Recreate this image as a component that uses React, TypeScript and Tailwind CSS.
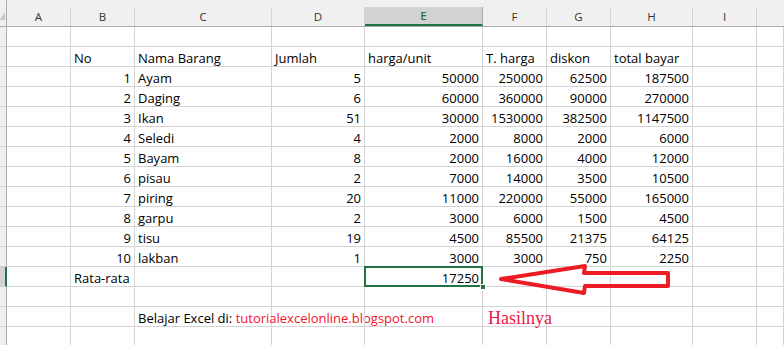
const cols = ["A", "B", "C", "D", "E", "F", "G", "H", "I", ""];

type Row = [number, string, number, number, number, number, number];

const items: Row[] = [
  [1, "Ayam", 5, 50000, 250000, 62500, 187500],
  [2, "Daging", 6, 60000, 360000, 90000, 270000],
  [3, "Ikan", 51, 30000, 1530000, 382500, 1147500],
  [4, "Seledi", 4, 2000, 8000, 2000, 6000],
  [5, "Bayam", 8, 2000, 16000, 4000, 12000],
  [6, "pisau", 2, 7000, 14000, 3500, 10500],
  [7, "piring", 20, 11000, 220000, 55000, 165000],
  [8, "garpu", 2, 3000, 6000, 1500, 4500],
  [9, "tisu", 19, 4500, 85500, 21375, 64125],
  [10, "lakban", 1, 3000, 3000, 750, 2250],
];

const gridCols =
  "grid grid-cols-[7px_64px_64px_137px_93px_118px_64px_64px_82px_64px_27px]";

function Cell({
  children,
  right,
  className = "",
}: {
  children?: React.ReactNode;
  right?: boolean;
  className?: string;
}) {
  return (
    <div
      className={`h-[20px] border-r border-b border-[#d4d4d4] px-[3px] text-[13px] leading-[22px] whitespace-nowrap ${
        right ? "text-right" : "text-left"
      } ${className}`}
    >
      {children}
    </div>
  );
}

function RowHead({ active }: { active?: boolean }) {
  return (
    <div
      className={`h-[20px] border-b border-[#d4d4d4] ${
        active
          ? "bg-[#d2d2d2] border-r-2 border-r-[#217346]"
          : "bg-[#f0f0f0] border-r border-r-[#ababab]"
      }`}
    />
  );
}

function SheetRow({
  cells,
  active,
}: {
  cells: { v?: React.ReactNode; right?: boolean; sel?: boolean }[];
  active?: boolean;
}) {
  return (
    <div className={gridCols}>
      <RowHead active={active} />
      {Array.from({ length: 10 }).map((_, i) => {
        const c = cells[i] ?? {};
        if (c.sel) {
          return (
            <div key={i} className="relative">
              <Cell right>{c.v}</Cell>
              <div className="absolute -left-[1px] -top-[1px] w-[119px] h-[21px] border-2 border-[#217346]" />
              <div className="absolute right-[-3px] bottom-[-3px] w-[6px] h-[6px] bg-[#217346] border border-white" />
            </div>
          );
        }
        return (
          <Cell key={i} right={c.right}>
            {c.v}
          </Cell>
        );
      })}
    </div>
  );
}

export default function App() {
  return (
    <div className="relative w-[784px] h-[345px] overflow-hidden bg-white text-black font-['Open_Sans',sans-serif]">
      {/* column letters */}
      <div className={`${gridCols} h-[27px] bg-[#f0f0f0] border-b border-[#ababab]`}>
        <div className="relative border-r border-[#ababab]">
          <div className="absolute left-0 top-[12px] w-0 h-0 border-t-[8px] border-t-transparent border-r-[5px] border-r-[#c6c6c6]" />
        </div>
        {cols.map((c, i) => (
          <div
            key={i}
            className={`mt-[7px] h-[19px] flex items-center justify-center text-[11.5px] ${
              c === "E"
                ? "bg-[#d2d2d2] text-[#217346] font-semibold border-b-2 border-[#217346] border-r border-r-[#ababab]"
                : "text-[#333] border-r border-[#d4d4d4]"
            } ${i === 9 ? "border-r-0" : ""}`}
          >
            {c}
          </div>
        ))}
      </div>

      <SheetRow cells={[]} />
      <SheetRow
        cells={[
          {},
          { v: "No" },
          { v: "Nama Barang" },
          { v: "Jumlah" },
          { v: "harga/unit" },
          { v: "T. harga" },
          { v: "diskon" },
          { v: "total bayar" },
        ]}
      />
      {items.map((r) => (
        <SheetRow
          key={r[0]}
          cells={[
            {},
            { v: r[0], right: true },
            { v: r[1] },
            { v: r[2], right: true },
            { v: r[3], right: true },
            { v: r[4], right: true },
            { v: r[5], right: true },
            { v: r[6], right: true },
          ]}
        />
      ))}
      <SheetRow
        active
        cells={[{}, { v: "Rata-rata" }, {}, {}, { v: 17250, sel: true }]}
      />
      <SheetRow cells={[]} />
      <SheetRow
        cells={[
          {},
          {},
          {
            v: (
              <span>
                Belajar Excel di:{" "}
                <span className="text-[#f4142c]">
                  tutorialexcelonline.blogspot.com
                </span>
              </span>
            ),
          },
        ]}
      />
      <SheetRow cells={[]} />

      {/* floating note and arrow */}
      <span className="absolute left-[488px] top-[306px] text-[18px] leading-[24px] text-[#e8194a] font-['Liberation_Serif',serif]">
        Hasilnya
      </span>
      <svg
        className="absolute left-0 top-0"
        width="784"
        height="345"
        viewBox="0 0 784 345"
      >
        <polygon
          points="501,279 585,266 584,273 668,273 668,286 585,286 584,293"
          fill="none"
          stroke="#ed1c24"
          strokeWidth="4"
          strokeLinejoin="round"
        />
      </svg>
    </div>
  );
}
